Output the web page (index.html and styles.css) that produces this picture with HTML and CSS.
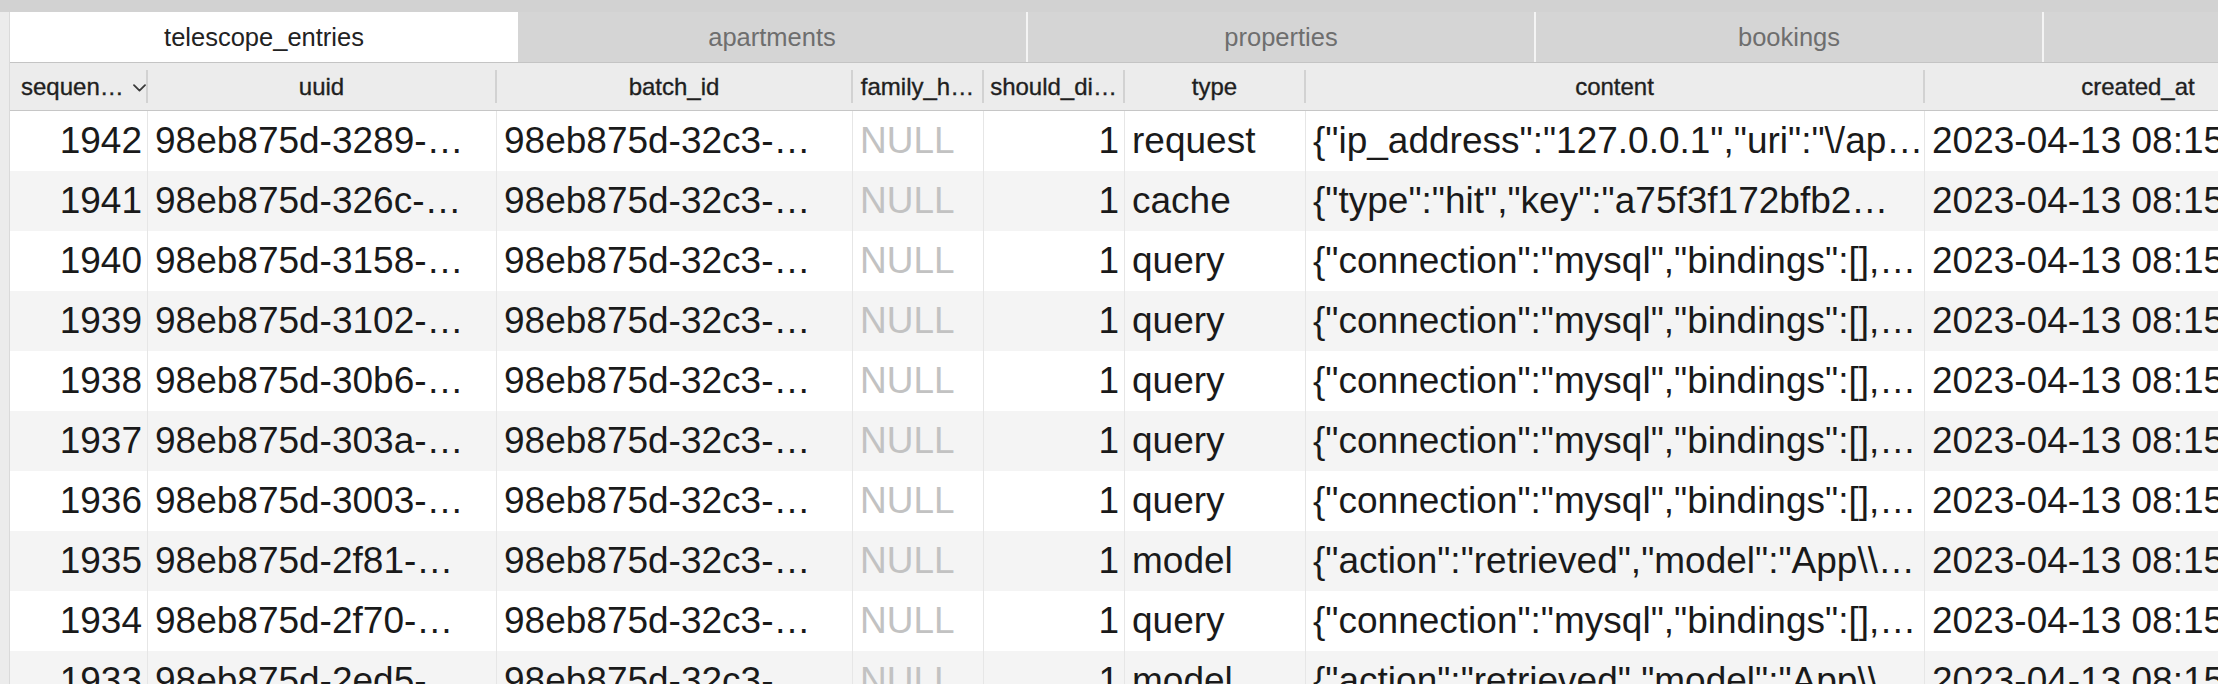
FILE: index.html
```html
<!DOCTYPE html>
<html>
<head>
<meta charset="utf-8">
<link rel="stylesheet" href="styles.css">
</head>
<body>
<div class="topbar"></div>
<div class="frame">
  <div class="strip"></div>
  <div class="main">
    <div class="tabs">
      <div class="tab active">telescope_entries</div>
      <div class="tab">apartments</div>
      <div class="tab sep">properties</div>
      <div class="tab sep">bookings</div>
      <div class="tab sep"></div>
    </div>
    <div class="grid head">
      <div class="hcell"><div class="hin left"><span>sequen…</span><svg class="chev" width="13" height="8" viewBox="0 0 13 8"><path d="M1 1.2 L6.5 6.6 L12 1.2" fill="none" stroke="#3a3a3a" stroke-width="1.8" stroke-linecap="round" stroke-linejoin="round"/></svg></div></div>
      <div class="hcell"><div class="hin">uuid</div></div>
      <div class="hcell"><div class="hin">batch_id</div></div>
      <div class="hcell"><div class="hin">family_h…</div></div>
      <div class="hcell"><div class="hin">should_di…</div></div>
      <div class="hcell"><div class="hin">type</div></div>
      <div class="hcell"><div class="hin">content</div></div>
      <div class="hcell"><div class="hin">created_at</div></div>
    </div>
    <div class="rows">
      <div class="grid row"><div class="c num">1942</div><div class="c">98eb875d-3289-…</div><div class="c">98eb875d-32c3-…</div><div class="c null">NULL</div><div class="c num">1</div><div class="c">request</div><div class="c">{"ip_address":"127.0.0.1","uri":"\/ap…</div><div class="c">2023-04-13 08:15:22</div></div>
      <div class="grid row alt"><div class="c num">1941</div><div class="c">98eb875d-326c-…</div><div class="c">98eb875d-32c3-…</div><div class="c null">NULL</div><div class="c num">1</div><div class="c">cache</div><div class="c">{"type":"hit","key":"a75f3f172bfb2…</div><div class="c">2023-04-13 08:15:22</div></div>
      <div class="grid row"><div class="c num">1940</div><div class="c">98eb875d-3158-…</div><div class="c">98eb875d-32c3-…</div><div class="c null">NULL</div><div class="c num">1</div><div class="c">query</div><div class="c">{"connection":"mysql","bindings":[],…</div><div class="c">2023-04-13 08:15:22</div></div>
      <div class="grid row alt"><div class="c num">1939</div><div class="c">98eb875d-3102-…</div><div class="c">98eb875d-32c3-…</div><div class="c null">NULL</div><div class="c num">1</div><div class="c">query</div><div class="c">{"connection":"mysql","bindings":[],…</div><div class="c">2023-04-13 08:15:22</div></div>
      <div class="grid row"><div class="c num">1938</div><div class="c">98eb875d-30b6-…</div><div class="c">98eb875d-32c3-…</div><div class="c null">NULL</div><div class="c num">1</div><div class="c">query</div><div class="c">{"connection":"mysql","bindings":[],…</div><div class="c">2023-04-13 08:15:22</div></div>
      <div class="grid row alt"><div class="c num">1937</div><div class="c">98eb875d-303a-…</div><div class="c">98eb875d-32c3-…</div><div class="c null">NULL</div><div class="c num">1</div><div class="c">query</div><div class="c">{"connection":"mysql","bindings":[],…</div><div class="c">2023-04-13 08:15:22</div></div>
      <div class="grid row"><div class="c num">1936</div><div class="c">98eb875d-3003-…</div><div class="c">98eb875d-32c3-…</div><div class="c null">NULL</div><div class="c num">1</div><div class="c">query</div><div class="c">{"connection":"mysql","bindings":[],…</div><div class="c">2023-04-13 08:15:22</div></div>
      <div class="grid row alt"><div class="c num">1935</div><div class="c">98eb875d-2f81-…</div><div class="c">98eb875d-32c3-…</div><div class="c null">NULL</div><div class="c num">1</div><div class="c">model</div><div class="c">{"action":"retrieved","model":"App\\…</div><div class="c">2023-04-13 08:15:22</div></div>
      <div class="grid row"><div class="c num">1934</div><div class="c">98eb875d-2f70-…</div><div class="c">98eb875d-32c3-…</div><div class="c null">NULL</div><div class="c num">1</div><div class="c">query</div><div class="c">{"connection":"mysql","bindings":[],…</div><div class="c">2023-04-13 08:15:22</div></div>
      <div class="grid row alt"><div class="c num">1933</div><div class="c">98eb875d-2ed5-…</div><div class="c">98eb875d-32c3-…</div><div class="c null">NULL</div><div class="c num">1</div><div class="c">model</div><div class="c">{"action":"retrieved","model":"App\\…</div><div class="c">2023-04-13 08:15:22</div></div>
    </div>
  </div>
</div>
</body>
</html>
```

FILE: styles.css
```css
html, body {
  margin: 0;
  padding: 0;
}
body {
  width: 2218px;
  height: 684px;
  overflow: hidden;
  background: #ffffff;
  font-family: "Liberation Sans", Arial, sans-serif;
  color: #1a1a1a;
}
.topbar {
  height: 12px;
  background: #d2d2d2;
}
.frame {
  display: flex;
  height: 672px;
}
.strip {
  width: 9px;
  flex-shrink: 0;
  background: #ececec;
  border-right: 1px solid #dadada;
}
.main {
  flex: 1;
  min-width: 0;
  overflow: hidden;
}
.tabs {
  display: flex;
  height: 50px;
  background: #d5d5d5;
  border-bottom: 1px solid #c4c4c4;
}
.tab {
  width: 508px;
  flex-shrink: 0;
  box-sizing: border-box;
  display: flex;
  align-items: center;
  justify-content: center;
  font-size: 25.5px;
  color: #6e6e6e;
}
.tab.active {
  background: #ffffff;
  color: #222222;
  width: 508px;
}
.tab.sep {
  border-left: 2px solid #f4f4f4;
}
.grid {
  display: grid;
  grid-template-columns: 138px 349px 356px 131px 141px 181px 619px 428px;
}
.head {
  height: 47px;
  background: #ececec;
  border-bottom: 1px solid #c6c6c6;
}
.hcell {
  display: flex;
  align-items: center;
  min-width: 0;
}
.hin {
  flex: 1;
  height: 33px;
  display: flex;
  align-items: center;
  justify-content: center;
  border-right: 2px solid #d2d2d2;
  font-size: 24px;
  color: #1f1f1f;
  -webkit-text-stroke: 0.35px #1f1f1f;
  white-space: nowrap;
  overflow: hidden;
}
.hin.left {
  justify-content: flex-start;
  padding-left: 11px;
  gap: 9px;
}
.chev {
  flex-shrink: 0;
  margin-top: 2px;
}
.row {
  height: 60px;
}
.row.alt {
  background: #f4f4f4;
}
.c {
  font-size: 37px;
  line-height: 60px;
  white-space: nowrap;
  overflow: hidden;
  padding: 0 6px 0 7px;
  border-right: 1px solid #e6e6e6;
  min-width: 0;
}
.c.num {
  text-align: right;
  padding-right: 5px;
}
.c.null {
  color: #c2c2c2;
}
```
